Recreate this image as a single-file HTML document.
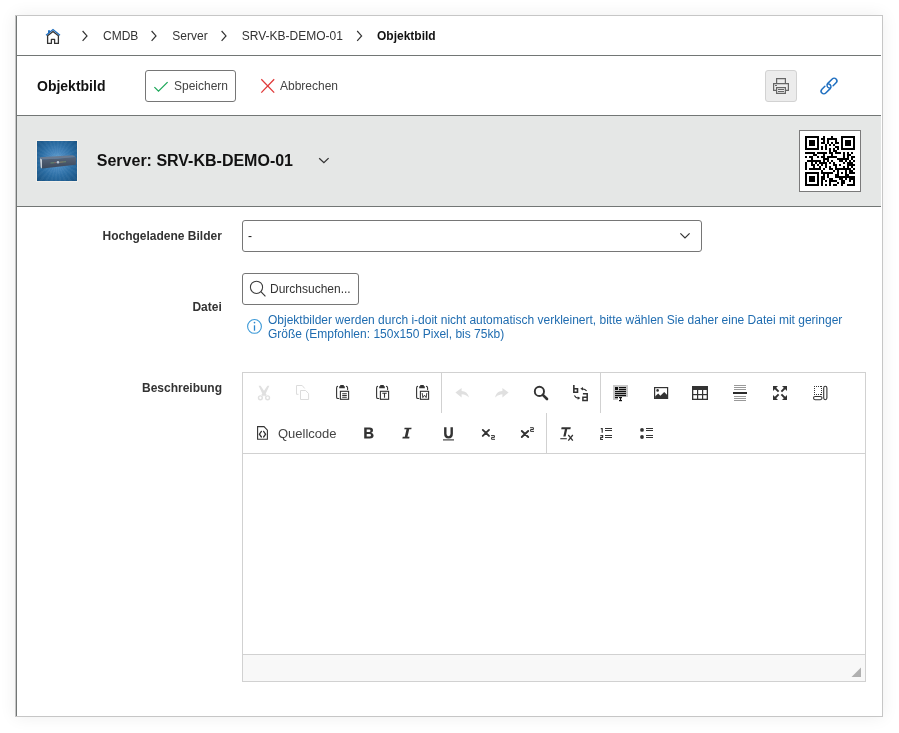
<!DOCTYPE html>
<html><head><meta charset="utf-8">
<style>
*{box-sizing:border-box;margin:0;padding:0}
html{background:#fff}
html,body{width:899px;height:733px;overflow:hidden;font-family:"Liberation Sans",sans-serif;color:#333}
.abs{position:absolute}
#panel{position:absolute;left:15px;top:15px;width:868px;height:702px;background:#fff;border:1px solid #c6c6c6;box-shadow:0 0 16px rgba(0,0,0,0.07)}
.t{position:absolute;white-space:nowrap;font-size:12px;line-height:14px;height:14px}
.b{font-weight:bold}
svg{position:absolute;overflow:visible}
</style></head><body><div style="position:absolute;left:0;top:0;width:899px;height:733px;will-change:transform">
<div id="panel"></div>
<div class="abs" style="left:16px;top:16px;width:1px;height:700px;background:#727675"></div>

<!-- breadcrumb -->
<svg style="left:0;top:0" width="899" height="733">
  <!-- home -->
  <path d="M46,35.2 L53,29.6 L60,35.2" fill="none" stroke="#1f6fc0" stroke-width="1.3"/>
  <path d="M48,30.3 L50,30.3 L50,32.2 L48,33.8 Z" fill="#1f6fc0"/>
  <path d="M47.6,43.4 V35.8 L53,31.5 L58.4,35.8 V43.4 H54.6 V39.4 H51.4 V43.4 Z" fill="none" stroke="#333" stroke-width="1.3" stroke-linejoin="round"/>
  <!-- chevrons -->
  <path d="M82.6,31 L87,35.9 L82.6,40.8" fill="none" stroke="#333" stroke-width="1.2"/>
  <path d="M151.6,31 L156,35.9 L151.6,40.8" fill="none" stroke="#333" stroke-width="1.2"/>
  <path d="M221.6,31 L226,35.9 L221.6,40.8" fill="none" stroke="#333" stroke-width="1.2"/>
  <path d="M357.2,31 L361.6,35.9 L357.2,40.8" fill="none" stroke="#333" stroke-width="1.2"/>
</svg>
<div class="t" style="left:103px;top:29px">CMDB</div>
<div class="t" style="left:172.3px;top:29px">Server</div>
<div class="t" style="left:241.7px;top:29px">SRV-KB-DEMO-01</div>
<div class="t b" style="left:377px;top:29px;color:#111">Objektbild</div>
<div class="abs" style="left:17px;top:55px;width:864px;height:1px;background:#727675"></div>

<!-- toolbar -->
<div class="t b" style="left:37px;top:79px;font-size:14px;line-height:14px;color:#111">Objektbild</div>
<div class="abs" style="left:145px;top:70px;width:91px;height:32px;border:1px solid #767676;border-radius:3px"></div>
<svg style="left:0;top:0" width="899" height="733">
  <path d="M154.4,87.1 L158.5,91.1 L167.6,82.1" fill="none" stroke="#1ea85a" stroke-width="1.3"/>
  <path d="M261.3,79.3 L274.2,92.6 M274.2,79.3 L261.3,92.6" fill="none" stroke="#e03a3a" stroke-width="1.3"/>
</svg>
<div class="t" style="left:174px;top:79px;color:#444">Speichern</div>
<div class="t" style="left:280px;top:79px;color:#444">Abbrechen</div>
<div class="abs" style="left:765px;top:70px;width:32px;height:32px;background:#ececec;border:1px solid #d2d2d2;border-radius:3px"></div>
<svg style="left:0;top:0" width="899" height="733">
  <!-- printer -->
  <g fill="none" stroke="#666" stroke-width="1.2">
   <path d="M776.6,83 V78.6 H785.4 V83"/>
   <path d="M776.2,90.4 H773.6 V83.6 H788.4 V90.4 H785.8"/>
   <rect x="776.6" y="87.6" width="8.8" height="5.8"/>
  </g>
  <g fill="#666">
   <rect x="778" y="89" width="6" height="1"/><rect x="778" y="91" width="6" height="1"/><rect x="775" y="85" width="2" height="1"/>
  </g>
  <!-- link -->
  <g fill="none" stroke="#1f6fc0" stroke-width="1.5" stroke-linecap="round" transform="translate(829 86) rotate(-45)">
    <path d="M-3.1,-2.7 H-7.3 A2.7,2.7 0 0 0 -7.3,2.7 H-1 A2.7,2.7 0 0 0 1.21,-1.55"/>
    <path d="M3.1,2.7 H7.3 A2.7,2.7 0 0 0 7.3,-2.7 H1 A2.7,2.7 0 0 0 -1.21,1.55"/>
  </g>
</svg>
<div class="abs" style="left:17px;top:115px;width:864px;height:1px;background:#727675"></div>

<!-- gray header -->
<div class="abs" style="left:17px;top:116px;width:864px;height:90px;background:#e5e7e6"></div>
<div class="abs" style="left:17px;top:206px;width:864px;height:1px;background:#727675"></div>
<div class="abs" style="left:37px;top:141px;width:40px;height:40px;background:repeating-conic-gradient(from 0deg at 50% 48%,rgba(255,255,255,0.035) 0deg 6deg,rgba(0,0,0,0) 6deg 12deg),radial-gradient(circle at 50% 48%,#6ea9d4 0%,#4686bd 28%,#2a6ca2 58%,#17507f 100%);box-shadow:0 0 0 1px rgba(255,250,240,0.5)"></div>
<svg style="left:0;top:0" width="899" height="733">
 <defs><linearGradient id="sf" x1="0" y1="0" x2="0" y2="1"><stop offset="0" stop-color="#56657b"/><stop offset="1" stop-color="#3c485a"/></linearGradient></defs>
 <path d="M39.3,157.3 L72.8,155.2 L76.2,157.2 L42.4,159.6 Z" fill="#6a7a90"/>
 <path d="M39.6,158 L42.4,159.6 L76.2,157.2 L75.8,164.8 L42.2,168.6 L40.5,167.6 Z" fill="url(#sf)"/>
 <path d="M40,158.3 L42,159.6 L42,168.4 L40.7,167.5 Z" fill="#c5ced8"/>
 <path d="M50.5,163 L54.5,162.7" stroke="#7fae6a" stroke-width="0.6"/>
 <path d="M54.5,162.7 L56,162.6" stroke="#c77060" stroke-width="0.6"/>
 <path d="M60,162.2 L63.5,161.9" stroke="#b8a35a" stroke-width="0.6"/>
 <path d="M63.5,161.9 L66,161.7" stroke="#7fae6a" stroke-width="0.6"/>
 <circle cx="58" cy="162.3" r="1.3" fill="#b9c5d0"/>
</svg>
<div class="t b" style="left:96.8px;top:153px;font-size:16px;line-height:16px;height:16px;color:#111">Server: SRV-KB-DEMO-01</div>
<svg style="left:0;top:0" width="899" height="733">
  <path d="M319.2,158.2 L323.9,162.7 L328.6,158.1" fill="none" stroke="#333" stroke-width="1.3"/>
</svg>
<div class="abs" style="left:799px;top:130px;width:62px;height:62px;background:#fff;border:1px solid #7a7a7a"></div>
<svg id="qr" style="left:805px;top:136px" width="50" height="50"><g fill="#000" shape-rendering="crispEdges"><rect x="0" y="0" width="14" height="2"/><rect x="18" y="0" width="2" height="2"/><rect x="26" y="0" width="2" height="2"/><rect x="36" y="0" width="14" height="2"/><rect x="0" y="2" width="2" height="2"/><rect x="12" y="2" width="2" height="2"/><rect x="16" y="2" width="4" height="2"/><rect x="22" y="2" width="10" height="2"/><rect x="36" y="2" width="2" height="2"/><rect x="48" y="2" width="2" height="2"/><rect x="0" y="4" width="2" height="2"/><rect x="4" y="4" width="6" height="2"/><rect x="12" y="4" width="2" height="2"/><rect x="18" y="4" width="2" height="2"/><rect x="22" y="4" width="2" height="2"/><rect x="30" y="4" width="2" height="2"/><rect x="36" y="4" width="2" height="2"/><rect x="40" y="4" width="6" height="2"/><rect x="48" y="4" width="2" height="2"/><rect x="0" y="6" width="2" height="2"/><rect x="4" y="6" width="6" height="2"/><rect x="12" y="6" width="2" height="2"/><rect x="16" y="6" width="4" height="2"/><rect x="22" y="6" width="2" height="2"/><rect x="26" y="6" width="2" height="2"/><rect x="30" y="6" width="4" height="2"/><rect x="36" y="6" width="2" height="2"/><rect x="40" y="6" width="6" height="2"/><rect x="48" y="6" width="2" height="2"/><rect x="0" y="8" width="2" height="2"/><rect x="4" y="8" width="6" height="2"/><rect x="12" y="8" width="2" height="2"/><rect x="20" y="8" width="2" height="2"/><rect x="24" y="8" width="2" height="2"/><rect x="28" y="8" width="2" height="2"/><rect x="36" y="8" width="2" height="2"/><rect x="40" y="8" width="6" height="2"/><rect x="48" y="8" width="2" height="2"/><rect x="0" y="10" width="2" height="2"/><rect x="12" y="10" width="2" height="2"/><rect x="16" y="10" width="2" height="2"/><rect x="20" y="10" width="2" height="2"/><rect x="30" y="10" width="4" height="2"/><rect x="36" y="10" width="2" height="2"/><rect x="48" y="10" width="2" height="2"/><rect x="0" y="12" width="14" height="2"/><rect x="16" y="12" width="2" height="2"/><rect x="20" y="12" width="2" height="2"/><rect x="24" y="12" width="2" height="2"/><rect x="28" y="12" width="2" height="2"/><rect x="32" y="12" width="2" height="2"/><rect x="36" y="12" width="14" height="2"/><rect x="24" y="14" width="2" height="2"/><rect x="28" y="14" width="4" height="2"/><rect x="0" y="16" width="10" height="2"/><rect x="12" y="16" width="10" height="2"/><rect x="24" y="16" width="4" height="2"/><rect x="30" y="16" width="6" height="2"/><rect x="38" y="16" width="2" height="2"/><rect x="42" y="16" width="2" height="2"/><rect x="46" y="16" width="2" height="2"/><rect x="8" y="18" width="4" height="2"/><rect x="18" y="18" width="2" height="2"/><rect x="26" y="18" width="2" height="2"/><rect x="38" y="18" width="2" height="2"/><rect x="42" y="18" width="4" height="2"/><rect x="0" y="20" width="2" height="2"/><rect x="4" y="20" width="4" height="2"/><rect x="12" y="20" width="2" height="2"/><rect x="16" y="20" width="4" height="2"/><rect x="22" y="20" width="10" height="2"/><rect x="38" y="20" width="2" height="2"/><rect x="42" y="20" width="2" height="2"/><rect x="46" y="20" width="4" height="2"/><rect x="6" y="22" width="2" height="2"/><rect x="18" y="22" width="6" height="2"/><rect x="32" y="22" width="12" height="2"/><rect x="46" y="22" width="2" height="2"/><rect x="2" y="24" width="14" height="2"/><rect x="18" y="24" width="2" height="2"/><rect x="22" y="24" width="2" height="2"/><rect x="26" y="24" width="2" height="2"/><rect x="34" y="24" width="4" height="2"/><rect x="40" y="24" width="2" height="2"/><rect x="44" y="24" width="2" height="2"/><rect x="48" y="24" width="2" height="2"/><rect x="0" y="26" width="2" height="2"/><rect x="6" y="26" width="2" height="2"/><rect x="10" y="26" width="2" height="2"/><rect x="14" y="26" width="8" height="2"/><rect x="24" y="26" width="2" height="2"/><rect x="28" y="26" width="2" height="2"/><rect x="38" y="26" width="2" height="2"/><rect x="42" y="26" width="6" height="2"/><rect x="0" y="28" width="2" height="2"/><rect x="6" y="28" width="4" height="2"/><rect x="12" y="28" width="2" height="2"/><rect x="16" y="28" width="2" height="2"/><rect x="20" y="28" width="2" height="2"/><rect x="28" y="28" width="4" height="2"/><rect x="34" y="28" width="2" height="2"/><rect x="42" y="28" width="8" height="2"/><rect x="0" y="30" width="2" height="2"/><rect x="8" y="30" width="2" height="2"/><rect x="14" y="30" width="2" height="2"/><rect x="20" y="30" width="2" height="2"/><rect x="24" y="30" width="2" height="2"/><rect x="30" y="30" width="2" height="2"/><rect x="38" y="30" width="2" height="2"/><rect x="42" y="30" width="2" height="2"/><rect x="46" y="30" width="2" height="2"/><rect x="0" y="32" width="2" height="2"/><rect x="4" y="32" width="12" height="2"/><rect x="18" y="32" width="2" height="2"/><rect x="24" y="32" width="4" height="2"/><rect x="30" y="32" width="16" height="2"/><rect x="48" y="32" width="2" height="2"/><rect x="16" y="34" width="2" height="2"/><rect x="28" y="34" width="2" height="2"/><rect x="32" y="34" width="2" height="2"/><rect x="40" y="34" width="2" height="2"/><rect x="44" y="34" width="4" height="2"/><rect x="0" y="36" width="14" height="2"/><rect x="16" y="36" width="12" height="2"/><rect x="32" y="36" width="2" height="2"/><rect x="36" y="36" width="2" height="2"/><rect x="40" y="36" width="2" height="2"/><rect x="44" y="36" width="6" height="2"/><rect x="0" y="38" width="2" height="2"/><rect x="12" y="38" width="2" height="2"/><rect x="18" y="38" width="2" height="2"/><rect x="22" y="38" width="2" height="2"/><rect x="30" y="38" width="4" height="2"/><rect x="40" y="38" width="4" height="2"/><rect x="0" y="40" width="2" height="2"/><rect x="4" y="40" width="6" height="2"/><rect x="12" y="40" width="2" height="2"/><rect x="16" y="40" width="4" height="2"/><rect x="22" y="40" width="2" height="2"/><rect x="30" y="40" width="20" height="2"/><rect x="0" y="42" width="2" height="2"/><rect x="4" y="42" width="6" height="2"/><rect x="12" y="42" width="2" height="2"/><rect x="16" y="42" width="4" height="2"/><rect x="24" y="42" width="4" height="2"/><rect x="34" y="42" width="4" height="2"/><rect x="40" y="42" width="2" height="2"/><rect x="44" y="42" width="6" height="2"/><rect x="0" y="44" width="2" height="2"/><rect x="4" y="44" width="6" height="2"/><rect x="12" y="44" width="2" height="2"/><rect x="16" y="44" width="2" height="2"/><rect x="20" y="44" width="2" height="2"/><rect x="24" y="44" width="8" height="2"/><rect x="36" y="44" width="4" height="2"/><rect x="44" y="44" width="2" height="2"/><rect x="48" y="44" width="2" height="2"/><rect x="0" y="46" width="2" height="2"/><rect x="12" y="46" width="2" height="2"/><rect x="16" y="46" width="2" height="2"/><rect x="24" y="46" width="2" height="2"/><rect x="32" y="46" width="2" height="2"/><rect x="36" y="46" width="4" height="2"/><rect x="48" y="46" width="2" height="2"/><rect x="0" y="48" width="14" height="2"/><rect x="16" y="48" width="2" height="2"/><rect x="20" y="48" width="2" height="2"/><rect x="24" y="48" width="2" height="2"/><rect x="28" y="48" width="4" height="2"/><rect x="36" y="48" width="2" height="2"/><rect x="42" y="48" width="8" height="2"/></g></svg>

<!-- form -->
<div class="t b" style="left:102.5px;top:229px;color:#333">Hochgeladene Bilder</div>
<div class="abs" style="left:242px;top:220px;width:460px;height:32px;border:1px solid #767676;border-radius:3px"></div>
<div class="t" style="left:248px;top:229px;color:#111">-</div>
<svg style="left:0;top:0" width="899" height="733">
  <path d="M680.4,233.4 L685,238 L689.6,233.4" fill="none" stroke="#333" stroke-width="1.2"/>
</svg>

<div class="t b" style="left:192.4px;top:300px;color:#333">Datei</div>
<div class="abs" style="left:242px;top:273px;width:117px;height:32px;border:1px solid #767676;border-radius:3px"></div>
<svg style="left:0;top:0" width="899" height="733">
  <circle cx="256.5" cy="287.3" r="6.1" fill="none" stroke="#3a3a3a" stroke-width="1.05"/>
  <path d="M260.9,291.7 L265.4,296.3" stroke="#333" stroke-width="1.1"/>
  <circle cx="254.5" cy="326.4" r="6.9" fill="none" stroke="#3d9ad8" stroke-width="1.1"/>
  <path d="M254.5,325.3 V330.7" stroke="#2a86cf" stroke-width="1.3"/>
  <circle cx="254.5" cy="322.6" r="0.85" fill="#2a86cf"/>
</svg>
<div class="t" style="left:270px;top:282px;color:#333">Durchsuchen...</div>
<div class="t" style="left:268px;top:313px;color:#1f6cb0">Objektbilder werden durch i-doit nicht automatisch verkleinert, bitte wählen Sie daher eine Datei mit geringer</div>
<div class="t" style="left:268px;top:327px;color:#1f6cb0">Größe (Empfohlen: 150x150 Pixel, bis 75kb)</div>

<div class="t b" style="left:142px;top:381px;color:#333">Beschreibung</div>

<!-- editor -->
<div class="abs" style="left:242px;top:372px;width:624px;height:310px;border:1px solid #d1d1d1;background:#fff"></div>
<div class="abs" style="left:243px;top:453px;width:622px;height:1px;background:#d1d1d1"></div>
<div class="abs" style="left:243px;top:654px;width:622px;height:27px;background:#f8f8f8;border-top:1px solid #d1d1d1"></div>
<div class="abs" style="left:441px;top:373px;width:1px;height:40px;background:#d1d1d1"></div>
<div class="abs" style="left:600px;top:373px;width:1px;height:40px;background:#d1d1d1"></div>
<div class="abs" style="left:546px;top:413px;width:1px;height:40px;background:#d1d1d1"></div>
<svg style="left:0;top:0" width="899" height="733">
  <path d="M851.5,677 L861,667.5 V677 Z" fill="#b0b0b0"/>
</svg>

<svg style="left:0;top:0" width="899" height="733">
 <!-- cut (disabled) -->
 <g fill="#e0e0e0">
  <path d="M258.6,385.8 L260.6,385.8 L266.6,394.8 L265,396.4 L261.8,392.6 Z"/>
  <path d="M269.4,385.8 L267.4,385.8 L261.4,394.8 L263,396.4 L266.2,392.6 Z"/>
 </g>
 <g fill="none" stroke="#e0e0e0" stroke-width="1.4">
  <circle cx="260.4" cy="397.8" r="1.9"/>
  <circle cx="267.6" cy="397.8" r="1.9"/>
 </g>
 <!-- copy (disabled) -->
 <g fill="none" stroke="#dcdcdc" stroke-width="1">
  <path d="M298.5,394.3 H296.5 V385.5 H302.2 L304.6,388.4"/>
  <path d="M300.5,390.5 H305.6 L308.6,393.6 V399.5 H300.5 Z"/>
 </g>
 <!-- paste icons -->
 <g fill="none" stroke="#333" stroke-width="1.1">
  <path d="M337.6,386.4 Q336.6,386.7 336.6,388 V397.2 Q336.6,398.5 338,398.5 H338.8" stroke-linecap="round"/>
  <path d="M346.4,386.4 Q347.6,386.7 347.6,388 V389.6" stroke-linecap="round"/>
  <rect x="340.4" y="391.3" width="8.2" height="8" />
  <path d="M342.2,393.8 H346.8 M342.2,395.5 H346.8 M342.2,397.2 H346.8"/>
  <path d="M377.6,386.4 Q376.6,386.7 376.6,388 V397.2 Q376.6,398.5 378,398.5 H378.8" stroke-linecap="round"/>
  <path d="M386.4,386.4 Q387.6,386.7 387.6,388 V389.6" stroke-linecap="round"/>
  <rect x="380.4" y="391.3" width="8.2" height="8" />
  <path d="M382.3,393.3 H386.7 M384.5,393.3 V397.8"/>
  <path d="M417.6,386.4 Q416.6,386.7 416.6,388 V397.2 Q416.6,398.5 418,398.5 H418.8" stroke-linecap="round"/>
  <path d="M426.4,386.4 Q427.6,386.7 427.6,388 V389.6" stroke-linecap="round"/>
  <rect x="420.4" y="391.3" width="8.2" height="8" />
  <path d="M422.2,393 L422.8,397.6 L424.5,395.2 L426.2,397.6 L426.8,393" stroke-width="0.9"/>
 </g>
 <path d="M339.2,388.2 V386.2 H340.2 V385 H343.8 V386.2 H344.8 V388.2 Z" fill="#333"/>
 <path d="M379.2,388.2 V386.2 H380.2 V385 H383.8 V386.2 H384.8 V388.2 Z" fill="#333"/>
 <path d="M419.2,388.2 V386.2 H420.2 V385 H423.8 V386.2 H424.8 V388.2 Z" fill="#333"/>
 <!-- undo/redo (disabled) -->
 <path d="M455.4,392.6 L461.6,387.9 V390.9 Q467.6,391.1 469,397.6 Q466.2,394.4 461.6,394.3 V397.5 Z" fill="#e0e0e0"/>
 <path d="M508.6,392.6 L502.4,387.9 V390.9 Q496.4,391.1 495,397.6 Q497.8,394.4 502.4,394.3 V397.5 Z" fill="#e0e0e0"/>
 <!-- search -->
 <circle cx="539.4" cy="391.4" r="4.6" fill="none" stroke="#333" stroke-width="1.9"/>
 <path d="M542.8,394.8 L547,399" stroke="#333" stroke-width="2.6" stroke-linecap="round"/>
 <!-- replace -->
 <g fill="none" stroke="#333">
  <path d="M573.85,385 V392.3 H577.5 V388.7 H573.85" stroke-width="1.6"/>
  <path d="M582.9,393.8 H587.2 V400.5 H582.9 V397.2 H587.2" stroke-width="1.5"/>
  <path d="M586.6,391 Q585.4,388.9 582.2,388.8" stroke-width="1.2"/>
  <path d="M574.4,395.5 Q575.6,398 578.4,398.1" stroke-width="1.2"/>
 </g>
 <path d="M580.3,388.8 L583,387.1 V390.5 Z" fill="#333"/>
 <path d="M580.4,398.1 L577.7,396.4 V399.8 Z" fill="#333"/>
 <!-- textarea -->
 <path d="M613,385 H628 V397 H618 V400 H613 Z" fill="#c8c8c8"/>
 <g fill="#111">
  <rect x="615" y="387" width="3" height="3"/>
  <rect x="619" y="387" width="7" height="1.2"/>
  <rect x="619" y="389" width="7" height="1.2"/>
  <rect x="615" y="391" width="11" height="1.2"/>
  <rect x="615" y="393" width="11" height="1.2"/>
  <rect x="615" y="395" width="11" height="1.2"/>
  <rect x="615" y="397" width="3" height="1.2"/>
  <rect x="619" y="397" width="3" height="1.2"/>
  <rect x="620" y="397.5" width="1.1" height="3"/>
  <rect x="619" y="400" width="3" height="1.2"/>
 </g>
 <!-- image -->
 <rect x="654.6" y="387.6" width="13" height="10.8" fill="none" stroke="#333" stroke-width="1.2"/>
 <circle cx="657.6" cy="390.4" r="1.3" fill="#333"/>
 <path d="M655.2,398 V396.2 L658.2,393.6 L660.4,395.8 L664.2,391.9 L667,394.8 V398 Z" fill="#333"/>
 <!-- table -->
 <g fill="#333">
  <rect x="692" y="386" width="16" height="4"/>
  <rect x="692" y="386" width="1.3" height="14"/>
  <rect x="706.7" y="386" width="1.3" height="14"/>
  <rect x="692" y="398.7" width="16" height="1.3"/>
  <rect x="692" y="394" width="16" height="1.2"/>
  <rect x="697" y="389" width="1.2" height="10"/>
  <rect x="702" y="389" width="1.2" height="10"/>
 </g>
 <!-- hr -->
 <g fill="#999">
  <rect x="734" y="385" width="12" height="1"/><rect x="734" y="387" width="12" height="1"/><rect x="734" y="389" width="12" height="1"/>
  <rect x="734" y="396" width="12" height="1"/><rect x="734" y="398" width="12" height="1"/><rect x="734" y="400" width="12" height="1"/>
 </g>
 <rect x="733" y="392" width="14" height="2" fill="#2a2a2a"/>
 <!-- maximize -->
 <g fill="#333">
  <path d="M773,386 H778 L773,391 Z"/>
  <path d="M787,386 H782 L787,391 Z"/>
  <path d="M773,400 H778 L773,395 Z"/>
  <path d="M787,400 H782 L787,395 Z"/>
 </g>
 <path d="M774.5,387.5 L778.6,391.6 M785.5,387.5 L781.4,391.6 M774.5,398.5 L778.6,394.4 M785.5,398.5 L781.4,394.4" stroke="#333" stroke-width="1.9"/>
 <!-- showblocks -->
 <g fill="#333"><rect x="814" y="386" width="1" height="1"/><rect x="814" y="394" width="1" height="1"/><rect x="816" y="386" width="1" height="1"/><rect x="816" y="394" width="1" height="1"/><rect x="818" y="386" width="1" height="1"/><rect x="818" y="394" width="1" height="1"/><rect x="820" y="386" width="1" height="1"/><rect x="820" y="394" width="1" height="1"/><rect x="814" y="388" width="1" height="1"/><rect x="821" y="388" width="1" height="1"/><rect x="814" y="390" width="1" height="1"/><rect x="821" y="390" width="1" height="1"/><rect x="814" y="392" width="1" height="1"/><rect x="821" y="392" width="1" height="1"/><rect x="821" y="386" width="1" height="1"/><rect x="821" y="394" width="1" height="1"/></g>
 <rect x="813.5" y="396.5" width="8.5" height="3.2" rx="1.6" fill="none" stroke="#333" stroke-width="1.1"/>
 <rect x="823.7" y="386.3" width="3.2" height="13.4" rx="1.6" fill="none" stroke="#333" stroke-width="1.1"/>
 <!-- source -->
 <path d="M257.6,426.6 H264 L267.4,430.2 V439.3 H257.6 Z" fill="none" stroke="#333" stroke-width="1.1"/>
 <path d="M261.4,431.4 L259.4,434.2 L261.4,437 M263.6,431.4 L265.6,434.2 L263.6,437" fill="none" stroke="#333" stroke-width="1.3" stroke-linecap="round"/>
 <!-- italic I -->
 <path d="M404.6,427.7 H411.6 L411.3,429.3 H409.2 L407.5,436.8 H409.5 L409.2,438.4 H402.4 L402.7,436.8 H404.8 L406.5,429.3 H404.3 Z" fill="#333"/>
 <!-- underline -->
 <path d="M443,439.9 H454" stroke="#333" stroke-width="1.1"/>
 <path d="M445.3,427.2 V433.8 Q445.3,437.4 448.5,437.4 Q451.7,437.4 451.7,433.8 V427.2" fill="none" stroke="#333" stroke-width="2.4"/>
 <!-- Tx -->
 <path d="M561.6,427.2 H570.8 L570.4,429.2 H567.2 L565.6,436.5 H563.3 L564.9,429.2 H561.2 Z" fill="#333"/>
 <path d="M560.3,438.7 H566.8" stroke="#333" stroke-width="1.1"/>
 <path d="M568.3,435 L572.8,440.6 M572.8,435 L568.3,440.6" stroke="#333" stroke-width="1.3"/>
 <!-- OL -->
 <g fill="#333">
  <rect x="605" y="428" width="7" height="1"/><rect x="605" y="430" width="7" height="1"/>
  <rect x="605" y="435" width="7" height="1"/><rect x="605" y="437" width="7" height="1"/>
  <rect x="646" y="428" width="7" height="1"/><rect x="646" y="430" width="7" height="1"/>
  <rect x="646" y="435" width="7" height="1"/><rect x="646" y="437" width="7" height="1"/>
 </g>
 <g fill="none" stroke="#333" stroke-width="1.2">
  <path d="M600.8,428.6 H602.2 V432.8"/>
  <path d="M600.3,435.5 H602.6 V437.3 H600.7 V439.5 H603"/>
 </g>
 <!-- UL -->
 <circle cx="642" cy="429.9" r="1.9" fill="#333"/>
 <circle cx="642" cy="437" r="1.9" fill="#333"/>
</svg>
<svg style="left:0;top:0" width="899" height="733"><path fill="#333" fill-rule="evenodd" d="M364.2,427.6 H369.6 Q373,427.6 373,430.4 Q373,432.3 371.2,432.8 Q373.6,433.4 373.6,435.5 Q373.6,438.4 369.8,438.4 H364.2 Z M366.7,429.5 V432.1 H369.2 Q370.5,432.1 370.5,430.8 Q370.5,429.5 369.2,429.5 Z M366.7,434 V436.5 H369.5 Q371,436.5 371,435.25 Q371,434 369.5,434 Z"/></svg>

<svg style="left:0;top:0" width="899" height="733">
 <path d="M482.8,429.9 L489,435.9 M489,429.9 L482.8,435.9" stroke="#333" stroke-width="1.9" stroke-linecap="round"/>
 <path d="M491.1,435.6 H494.4 V437.4 H491.6 V439.3 H495" fill="none" stroke="#333" stroke-width="1"/>
 <path d="M521.8,431 L528.2,437 M528.2,431 L521.8,437" stroke="#333" stroke-width="1.9" stroke-linecap="round"/>
 <path d="M530.1,427.7 H533.4 V429.5 H530.6 V431.4 H534" fill="none" stroke="#333" stroke-width="1"/>
</svg>

<div class="t" style="left:278px;top:427px;font-size:13px;line-height:14px;color:#444">Quellcode</div>
</div></body></html>
